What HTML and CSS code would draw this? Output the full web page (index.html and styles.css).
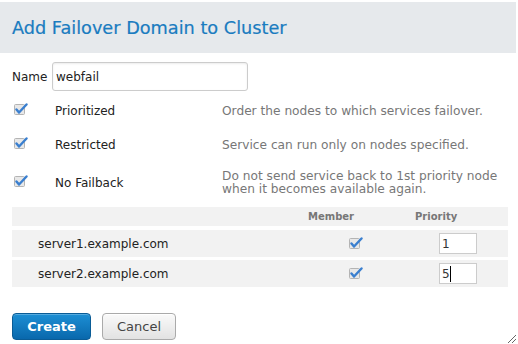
FILE: index.html
```html
<!DOCTYPE html>
<html lang="en">
<head>
  <meta charset="UTF-8">
  <title>Add Failover Domain to Cluster</title>
  <link rel="stylesheet" href="styles.css">
</head>
<body>

<div id="dialog">
  <div class="dialog-header">
    <h1>Add Failover Domain to Cluster</h1>
  </div>

  <div class="dialog-body">
    <div class="name-row">
      <label for="domain-name">Name</label>
      <input id="domain-name" class="text-input" type="text" value="webfail">
    </div>

    <div class="option-row">
      <span class="check"><svg width="14" height="12" viewBox="0 0 14 12"><rect x="0.5" y="1.5" width="10" height="10" rx="1" fill="#e8e8e8" stroke="#b4b4b4"/><path d="M2.5 6.5 L5 9.5 L12.5 1.5" fill="none" stroke="#3a7fcf" stroke-width="2.4" stroke-linecap="round" stroke-linejoin="round"/></svg></span>
      <span class="option-label">Prioritized</span>
      <span class="option-desc">Order the nodes to which services failover.</span>
    </div>
    <div class="option-row">
      <span class="check"><svg width="14" height="12" viewBox="0 0 14 12"><rect x="0.5" y="1.5" width="10" height="10" rx="1" fill="#e8e8e8" stroke="#b4b4b4"/><path d="M2.5 6.5 L5 9.5 L12.5 1.5" fill="none" stroke="#3a7fcf" stroke-width="2.4" stroke-linecap="round" stroke-linejoin="round"/></svg></span>
      <span class="option-label">Restricted</span>
      <span class="option-desc">Service can run only on nodes specified.</span>
    </div>
    <div class="option-row option-tall">
      <span class="check"><svg width="14" height="12" viewBox="0 0 14 12"><rect x="0.5" y="1.5" width="10" height="10" rx="1" fill="#e8e8e8" stroke="#b4b4b4"/><path d="M2.5 6.5 L5 9.5 L12.5 1.5" fill="none" stroke="#3a7fcf" stroke-width="2.4" stroke-linecap="round" stroke-linejoin="round"/></svg></span>
      <span class="option-label">No Failback</span>
      <span class="option-desc">Do not send service back to 1st priority node<br>when it becomes available again.</span>
    </div>

    <div class="nodes">
      <div class="nodes-head">
        <span class="col-name"></span>
        <span class="col-member">Member</span>
        <span class="col-priority">Priority</span>
      </div>
      <div class="node-row">
        <span class="col-name">server1.example.com</span>
        <span class="col-member"><svg width="14" height="12" viewBox="0 0 14 12"><rect x="0.5" y="1.5" width="10" height="10" rx="1" fill="#e8e8e8" stroke="#b4b4b4"/><path d="M2.5 6.5 L5 9.5 L12.5 1.5" fill="none" stroke="#3a7fcf" stroke-width="2.4" stroke-linecap="round" stroke-linejoin="round"/></svg></span>
        <span class="col-priority"><input class="prio-input" type="text" value="1"></span>
      </div>
      <div class="node-row">
        <span class="col-name">server2.example.com</span>
        <span class="col-member"><svg width="14" height="12" viewBox="0 0 14 12"><rect x="0.5" y="1.5" width="10" height="10" rx="1" fill="#e8e8e8" stroke="#b4b4b4"/><path d="M2.5 6.5 L5 9.5 L12.5 1.5" fill="none" stroke="#3a7fcf" stroke-width="2.4" stroke-linecap="round" stroke-linejoin="round"/></svg></span>
        <span class="col-priority"><span class="prio-input prio-focus">5<i class="caret"></i></span></span>
      </div>
    </div>

    <div class="actions">
      <button class="btn btn-primary">Create</button>
      <button class="btn">Cancel</button>
    </div>
  </div>

  <div class="resize-grip"></div>
</div>

</body>
</html>
```

FILE: styles.css
```css
body {
  margin: 0;
  background: #ffffff;
  font-family: "DejaVu Sans", sans-serif;
  color: #333333;
}

#dialog {
  position: relative;
  width: 518px;
  height: 344px;
  padding-top: 2px;
  box-sizing: border-box;
}

.dialog-header {
  background-color: #e6e9ec;
  height: 51px;
  margin-right: 2px;
  display: flex;
  align-items: center;
  padding-left: 12px;
}

.dialog-header h1 {
  margin: 0;
  font-size: 17.7px;
  font-weight: normal;
  color: #1a7cc0;
  padding-top: 1px;
  -webkit-text-stroke: 0.2px #1a7cc0;
}

.dialog-body {
  padding: 9px 10px 0 12px;
}

.name-row {
  display: flex;
  align-items: center;
  font-size: 12px;
  color: #222;
}

.name-row label {
  width: 40px;
}

.text-input {
  width: 196px;
  height: 29px;
  box-sizing: border-box;
  border: 1px solid #cccccc;
  border-radius: 3px;
  padding: 0 3px;
  font-family: "DejaVu Sans", sans-serif;
  font-size: 12px;
  color: #222;
  box-shadow: inset 0 1px 2px rgba(0, 0, 0, 0.08);
  outline: none;
}

.option-row {
  display: flex;
  align-items: center;
  min-height: 34px;
}

.option-row:nth-of-type(2) {
  margin-top: 3px;
}

.option-tall {
  min-height: 42px;
}

.check {
  width: 41px;
  display: flex;
  padding-left: 2px;
  padding-bottom: 4px;
}

.option-label {
  width: 167px;
  font-size: 12px;
  color: #222;
}

.option-desc {
  flex: 1;
  font-size: 12.2px;
  color: #777777;
  line-height: 13px;
  white-space: nowrap;
}

.nodes {
  width: 496px;
  margin-top: 3px;
  display: flex;
  flex-direction: column;
  gap: 4px;
}

.nodes-head,
.node-row {
  display: flex;
  align-items: center;
  background-color: #f2f2f2;
}

.nodes-head {
  height: 19px;
  font-size: 10px;
  font-weight: bold;
  color: #777777;
}

.node-row {
  height: 27px;
  font-size: 12px;
  color: #222;
}

.node-row + .node-row {
  margin-top: -1px;
}

.col-name,
.col-member,
.col-priority {
  box-sizing: border-box;
}

.col-name {
  width: 282px;
  padding-left: 26px;
}

.col-member {
  width: 92px;
  display: flex;
}

.nodes-head .col-member {
  padding-left: 14px;
}

.node-row .col-member {
  padding-left: 55px;
  padding-bottom: 2px;
}

.col-priority {
  flex: 1;
  display: flex;
}

.nodes-head .col-priority {
  padding-left: 29px;
}

.node-row .col-priority {
  padding-left: 53px;
}

.prio-input {
  width: 38px;
  height: 21px;
  box-sizing: border-box;
  border: 1px solid #cccccc;
  background: #ffffff;
  padding: 0 2px;
  font-family: "DejaVu Sans", sans-serif;
  font-size: 12px;
  color: #333;
  outline: none;
  display: flex;
  align-items: center;
}

.caret {
  display: inline-block;
  width: 1px;
  height: 16px;
  background: #000;
}

.actions {
  display: flex;
  gap: 11px;
  margin-top: 26px;
}

.btn {
  height: 27px;
  padding: 0 14px;
  font-family: "DejaVu Sans", sans-serif;
  font-size: 13px;
  color: #444;
  border: 1px solid #aaaaaa;
  border-radius: 4px;
  background: linear-gradient(#fafafa, #e2e2e2);
  box-shadow: inset 0 1px 0 #ffffff;
}

.btn-primary {
  width: 79px;
  padding: 0;
  color: #ffffff;
  font-weight: bold;
  border-color: #0a5c96;
  background: linear-gradient(#1d8fd4, #0968ac);
  box-shadow: inset 0 1px 0 rgba(255, 255, 255, 0.25);
}

.resize-grip {
  position: absolute;
  right: 2px;
  bottom: 1px;
  width: 8px;
  height: 8px;
  background: linear-gradient(135deg, transparent 45%, #666 45%, #666 55%, transparent 55%, transparent 70%, #666 70%, #666 80%, transparent 80%);
}
```
